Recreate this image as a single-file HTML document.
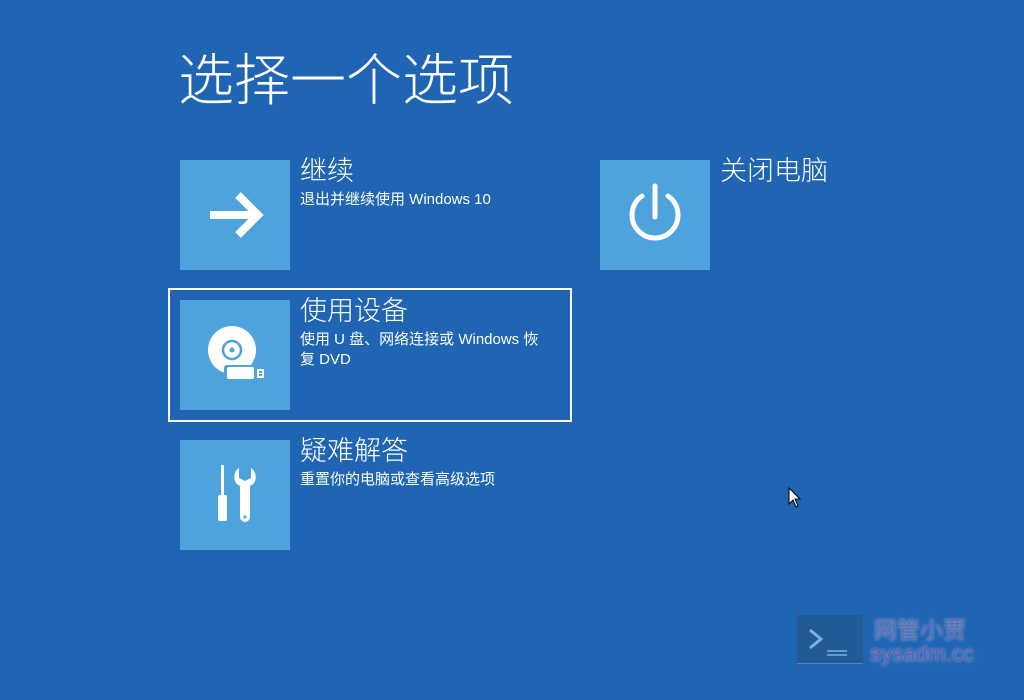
<!DOCTYPE html>
<html><head><meta charset="utf-8"><style>
body{margin:0;width:1024px;height:700px;background:#1f65b3;overflow:hidden;position:relative;font-family:"Liberation Sans","Noto Sans CJK SC",sans-serif;color:#fff}
.a{position:absolute}
.tile{position:absolute;width:110px;height:110px;background:#4fa3dd}
.t{position:absolute;font-size:27px;line-height:30px;font-weight:300}
.s{position:absolute;font-size:15px;line-height:20px;width:252px}
</style></head><body>
<div class="a" style="left:178px;top:44px;font-size:56px;line-height:74px;font-weight:300">选择一个选项</div>

<div class="tile" style="left:180px;top:160px"><svg width="110" height="110"><path d="M30 55H78M58 35L78 55L58 75" stroke="#fff" stroke-width="8" fill="none"/></svg></div>
<div class="t" style="left:300px;top:156px">继续</div>
<div class="s" style="left:300px;top:190px">退出并继续使用 Windows 10</div>

<div class="tile" style="left:600px;top:160px"><svg width="110" height="110"><path d="M55 26V57" stroke="#fff" stroke-width="5" stroke-linecap="round"/><path d="M42 36A23 23 0 1 0 68 36" stroke="#fff" stroke-width="5" fill="none" stroke-linecap="round"/></svg></div>
<div class="t" style="left:720px;top:156px">关闭电脑</div>

<div class="a" style="left:168px;top:288px;width:400px;height:130px;border:2px solid #fff"></div>
<div class="tile" style="left:180px;top:300px"><svg width="110" height="110"><circle cx="52" cy="50" r="24" fill="#fff"/><circle cx="52" cy="50" r="9" fill="none" stroke="#4fa3dd" stroke-width="2.5"/><circle cx="52" cy="50" r="2.5" fill="#4fa3dd"/><rect x="44" y="65" width="32" height="16" rx="3" fill="#4fa3dd"/><rect x="47" y="67" width="27" height="12" rx="2" fill="#fff"/><rect x="77" y="69" width="7" height="9" fill="#fff"/><rect x="79" y="71" width="3" height="2" fill="#4fa3dd"/><rect x="79" y="74" width="3" height="2" fill="#4fa3dd"/></svg></div>
<div class="t" style="left:300px;top:296px">使用设备</div>
<div class="s" style="left:300px;top:330px">使用 U 盘、网络连接或 Windows 恢复 DVD</div>

<div class="tile" style="left:180px;top:440px"><svg width="110" height="110"><rect x="41" y="25" width="3" height="30" fill="#fff"/><rect x="38" y="55" width="9" height="26" rx="2" fill="#fff"/><path d="M59 28C52 33 53 43 60 46V77A5 5 0 0 0 70 77V46C77 43 78 33 71 28V38L65 41L59 38Z" fill="#fff"/><circle cx="65" cy="77" r="1.5" fill="#4fa3dd"/></svg></div>
<div class="t" style="left:300px;top:436px">疑难解答</div>
<div class="s" style="left:300px;top:470px">重置你的电脑或查看高级选项</div>

<svg class="a" style="left:788px;top:487px" width="14" height="22"><path d="M1 1V17L5 13L8 20L10 19L7 12H12Z" fill="#fff" stroke="#000" stroke-width="1"/></svg>

<div class="a" style="left:797px;top:615px;width:66px;height:48px;background:#215a96;border-bottom:1px solid #4a86c4"></div>
<svg class="a" style="left:797px;top:615px" width="66" height="48"><path d="M13 15L24 24L13 33" stroke="#7fb0e0" stroke-width="3" fill="none"/><path d="M30 36H50M30 40H50" stroke="#7fb0e0" stroke-width="1.5"/></svg>
<div class="a" style="left:874px;top:616px;font-size:23px;line-height:28px;color:#6a6aa8;text-shadow:0 0 3px #8fb8e8">网管小贾</div>
<div class="a" style="left:870px;top:642px;font-size:22px;line-height:24px;color:#6a5fa8;text-shadow:0 0 3px #8fb8e8">sysadm.cc</div>
</body></html>
